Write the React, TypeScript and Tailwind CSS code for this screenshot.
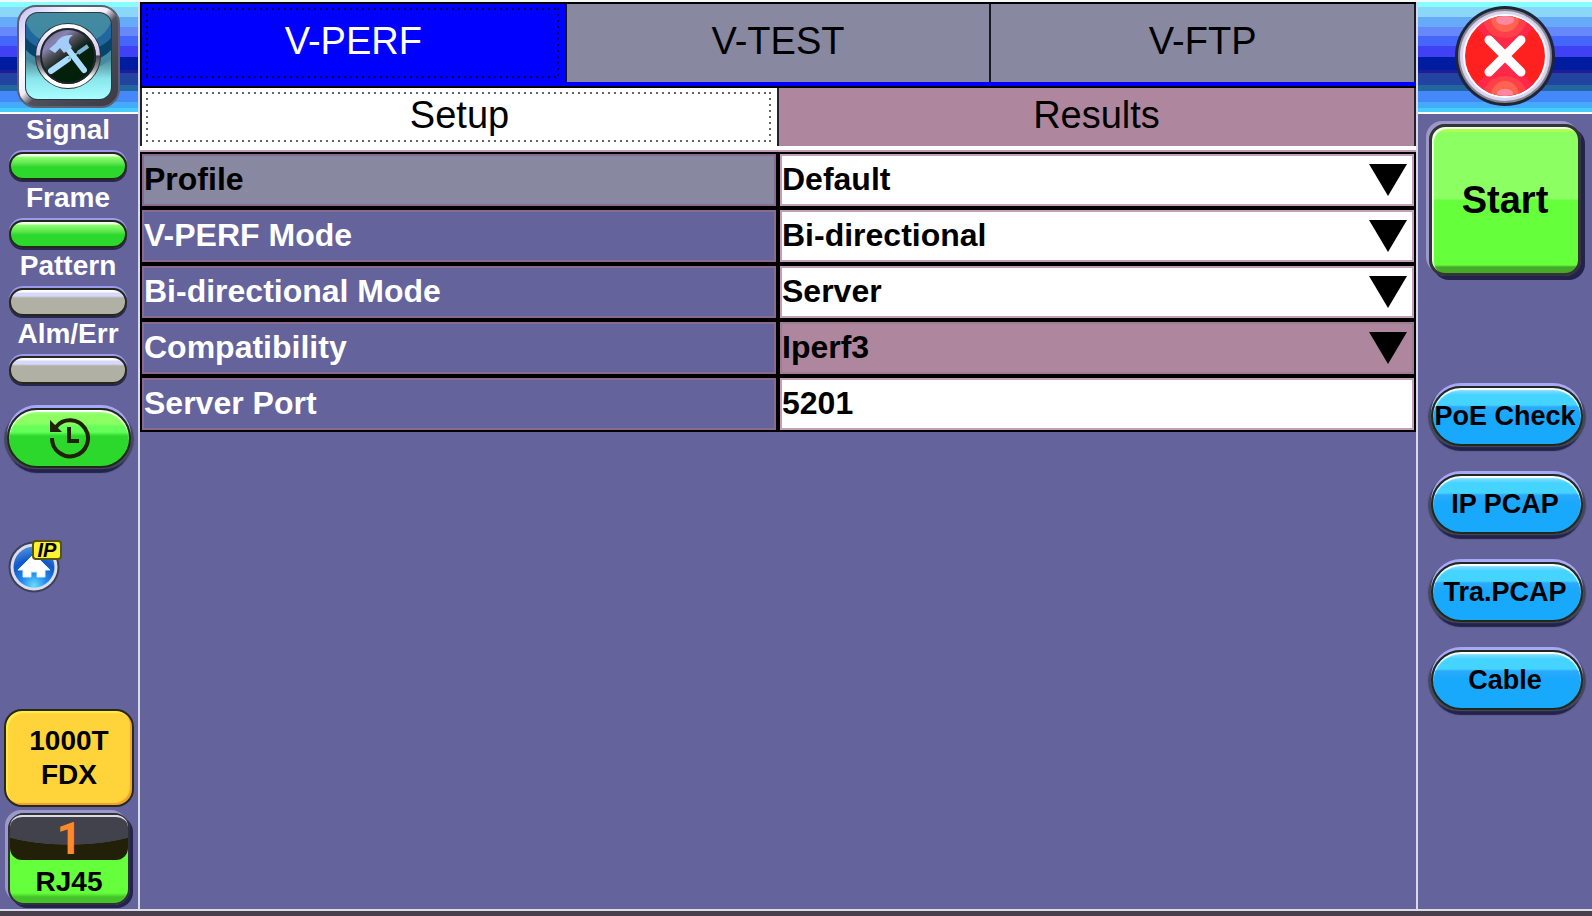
import { useState, type ReactNode } from 'react';

const HEADER_STRIPES =
  'bg-[linear-gradient(180deg,#88ffff_0_5px,#8bd7fa_5px_15px,#66aafa_15px_25px,#6688fa_25px_34px,#4466fa_34px_44px,#4040f5_44px_55px,#001ca0_55px_68px,#201c98_68px_71px,#2244a0_71px_83px,#2266a0_83px_89px,#4488fa_89px_100px,#44aafa_100px_106px,#44ccfa_106px_112px)]';

const DOTS_DARK =
  'bg-[repeating-linear-gradient(90deg,#00004a_0_2px,transparent_2px_6px),repeating-linear-gradient(90deg,#00004a_0_2px,transparent_2px_6px),repeating-linear-gradient(180deg,#00004a_0_2px,transparent_2px_6px),repeating-linear-gradient(180deg,#00004a_0_2px,transparent_2px_6px)]';
const DOTS_GRAY =
  'bg-[repeating-linear-gradient(90deg,#666666_0_2px,transparent_2px_6px),repeating-linear-gradient(90deg,#666666_0_2px,transparent_2px_6px),repeating-linear-gradient(180deg,#666666_0_2px,transparent_2px_6px),repeating-linear-gradient(180deg,#666666_0_2px,transparent_2px_6px)]';

function FocusDots({ tone }: { tone: string }) {
  return (
    <span
      aria-hidden="true"
      className={`pointer-events-none absolute inset-y-1 right-1.5 left-1 bg-no-repeat [background-position:top,bottom,left,right] [background-size:100%_2px,100%_2px,2px_100%,2px_100%] ${tone}`}
    />
  );
}

function ToolsIcon() {
  return (
    <svg viewBox="0 0 104 104" className="size-[104px]" aria-hidden="true">
      <defs>
        <linearGradient id="frame" x1="0" y1="0" x2="1" y2="1">
          <stop offset="0" stopColor="#c4bcf0" />
          <stop offset="0.12" stopColor="#dcd8fa" />
          <stop offset="0.3" stopColor="#ffffff" />
          <stop offset="0.46" stopColor="#f0eef8" />
          <stop offset="0.54" stopColor="#50505c" />
          <stop offset="1" stopColor="#3a3a46" />
        </linearGradient>
        <linearGradient id="plate" x1="0" y1="0" x2="0" y2="1">
          <stop offset="0" stopColor="#448aa0" />
          <stop offset="0.3" stopColor="#3f88a4" />
          <stop offset="0.5" stopColor="#3a7c9c" />
          <stop offset="0.64" stopColor="#66b0b8" />
          <stop offset="0.76" stopColor="#88e4ec" />
          <stop offset="1" stopColor="#aaffff" />
        </linearGradient>
        <linearGradient id="ring" x1="0" y1="0" x2="0" y2="1">
          <stop offset="0" stopColor="#ffffff" />
          <stop offset="0.48" stopColor="#c8c4ec" />
          <stop offset="0.5" stopColor="#44444c" />
          <stop offset="0.72" stopColor="#9a9aa0" />
          <stop offset="0.85" stopColor="#ffffff" />
          <stop offset="1" stopColor="#ffffff" />
        </linearGradient>
        <linearGradient id="dial" x1="0.1" y1="0" x2="0.8" y2="0.9">
          <stop offset="0" stopColor="#5a5a68" />
          <stop offset="0.28" stopColor="#8a84b4" />
          <stop offset="0.4" stopColor="#55555f" />
          <stop offset="0.55" stopColor="#1c2824" />
          <stop offset="0.62" stopColor="#04200c" />
          <stop offset="1" stopColor="#002008" />
        </linearGradient>
        <clipPath id="plateClip">
          <rect x="9" y="9" width="85" height="86" rx="12" />
        </clipPath>
      </defs>
      <rect x="1" y="2" width="101" height="101" rx="18" fill="url(#frame)" stroke="#5c6070" strokeWidth="2" />
      <rect x="8" y="8" width="87" height="88" rx="13" fill="#2c3844" />
      <g clipPath="url(#plateClip)">
        <rect x="9" y="9" width="85" height="86" fill="url(#plate)" />
        <path d="M9 18Q16 40 51 42Q86 40 94 18V54Q78 64 51 64Q24 64 9 54Z" fill="#2266a0" />
        <path d="M9 34Q20 48 51 50Q82 48 94 34V50Q80 58 51 58Q22 58 9 50Z" fill="#06446c" />
        <path d="M9 46Q16 54 28 56L30 66Q16 62 9 54ZM94 46Q87 54 75 56L73 66Q87 62 94 54Z" fill="#448aa0" />
      </g>
      <circle cx="51" cy="52" r="33" fill="#30343c" />
      <circle cx="51" cy="52" r="30" fill="url(#dial)" stroke="url(#ring)" strokeWidth="4" />
      <circle cx="51" cy="52" r="27" fill="none" stroke="#20242c" strokeWidth="2" />
      <path d="M34 67L51 55" stroke="#aaddff" strokeWidth="6" strokeLinecap="round" />
      <path d="M51 55L64 47" stroke="#7ab4d8" strokeWidth="2" />
      <path d="M61 49L71 42" stroke="#7ab4d8" strokeWidth="4" />
      <path d="M47 40L67 66" stroke="#aaddff" strokeWidth="6" strokeLinecap="round" />
      <path d="M32 45L39 39Q44 30 56 31Q51 34 52 39L55 43L47 49L43 44L38 49Z" fill="#a4ccf8" />
    </svg>
  );
}

function CloseIcon() {
  return (
    <svg viewBox="0 0 104 104" className="size-[104px]" aria-hidden="true">
      <defs>
        <clipPath id="disc">
          <circle cx="52" cy="52" r="40" />
        </clipPath>
      </defs>
      <circle cx="52" cy="52" r="50" fill="#20243a" />
      <circle cx="52" cy="52" r="47" fill="#84848e" />
      <circle cx="52" cy="52" r="45" fill="#d8d4f0" />
      <circle cx="52" cy="52" r="42" fill="#fff" />
      <circle cx="52" cy="52" r="40" fill="#ff2020" />
      <g clipPath="url(#disc)">
        <path d="M52 56L24 24V8H80V24Z" fill="#ff2848" />
        <path d="M52 52L24 80V96H80V80Z" fill="#ff2848" />
        <ellipse cx="52" cy="14" rx="22" ry="20" fill="#ff4048" />
        <ellipse cx="52" cy="92" rx="22" ry="20" fill="#ff4048" />
        <ellipse cx="52" cy="14" rx="14" ry="14" fill="#ff6450" />
        <ellipse cx="52" cy="92" rx="14" ry="15" fill="#ff6450" />
        <ellipse cx="52" cy="16" rx="9" ry="5" fill="#ff88a0" />
        <ellipse cx="52" cy="89" rx="8" ry="4" fill="#ff88a0" />
      </g>
      <path d="M36 36L68 68M68 36L36 68" stroke="#fff" strokeWidth="9" strokeLinecap="round" />
    </svg>
  );
}

function HistoryIcon() {
  return (
    <svg viewBox="0 0 44 44" className="size-11" aria-hidden="true" fill="none" stroke="#222008" strokeWidth="4">
      <path d="M5 22A18 18 0 1 0 9 11" />
      <path d="M3 4V16H15Z" fill="#222008" stroke="none" />
      <path d="M22 11V25H32" />
    </svg>
  );
}

function HomeIcon() {
  return (
    <svg viewBox="0 0 56 56" className="size-14" aria-hidden="true">
      <defs>
        <radialGradient id="globe" cx="0.5" cy="0.95" r="0.9">
          <stop offset="0" stopColor="#66ddff" />
          <stop offset="0.35" stopColor="#2288ee" />
          <stop offset="0.7" stopColor="#1058c8" />
          <stop offset="1" stopColor="#4488dd" />
        </radialGradient>
      </defs>
      <circle cx="26" cy="27" r="25.5" fill="#3c4058" />
      <circle cx="26" cy="27" r="23.5" fill="#dcdcec" />
      <circle cx="26" cy="27" r="20.5" fill="url(#globe)" />
      <path d="M26 14L42 30H37V37H29V32H23V37H15V30H10Z" fill="#fff" stroke="#d8ecff" strokeLinejoin="round" />
    </svg>
  );
}

function Led({ label, on }: { label: string; on: boolean }) {
  return (
    <li className="flex h-[68px] flex-col items-center">
      <span className="text-[28px] leading-8 font-bold text-white">{label}</span>
      <span
        className={`mt-1.5 h-7 w-[118px] rounded-full border-2 border-[#26261c] shadow-[0_-2px_0_#9a9aee,0_2px_0_#24284c] ${
          on
            ? 'bg-[linear-gradient(180deg,#f0ffe8_0_2px,#90ff70_3px,#60e850_9px,#2cd82c_13px)]'
            : 'bg-[linear-gradient(180deg,#fcfcff_0_2px,#d8d8fc_3px_6px,#b0b0a4_8px)]'
        }`}
      />
    </li>
  );
}

const CAPSULE =
  'flex h-[60px] shrink-0 items-center justify-center rounded-full border-2 border-[#22281c] whitespace-nowrap shadow-[inset_0_2px_1px_#ffffff,0_-3px_0_#a8a8f8,-3px_1px_1px_#44485c,3px_1px_1px_#44485c,0_5px_1px_#22224a]';

function ToolButton({ children }: { children: ReactNode }) {
  return (
    <button
      type="button"
      className={`${CAPSULE} w-[152px] bg-[linear-gradient(180deg,#88dcff_0_2px,#44d4ff_7px_17px,#2aaaff_19px,#18a8fc_28px)] pr-1 text-[27px] leading-8 font-bold text-black`}
    >
      {children}
    </button>
  );
}

const LABEL = 'flex items-center border-2 border-[#8a6a90] pb-0.5 text-[32px] leading-9 font-bold';
const FIELD =
  'block h-full w-full appearance-none border-2 pb-0.5 text-[32px] leading-9 font-bold text-black opacity-100 outline-none';

function Row({ id, label, active, children }: { id: string; label: string; active?: boolean; children: ReactNode }) {
  return (
    <div className="grid h-[52px] grid-cols-2 gap-1">
      <label htmlFor={id} className={`${LABEL} ${active ? 'bg-[#8888a0] text-black' : 'bg-[#64639c] text-white'}`}>
        {label}
      </label>
      <div className="relative">{children}</div>
    </div>
  );
}

function Choice({ id, options, locked }: { id: string; options: string[]; locked?: boolean }) {
  return (
    <>
      <select
        id={id}
        disabled={locked}
        className={`${FIELD} ${locked ? 'border-[#a07c94] bg-[#ae879f]' : 'border-[#c4a0b8] bg-white'}`}
      >
        {options.map((option) => (
          <option key={option}>{option}</option>
        ))}
      </select>
      <svg viewBox="0 0 38 32" className="pointer-events-none absolute top-2.5 right-[7px] h-8 w-[38px]" aria-hidden="true">
        <path d="M0 0H38L19 32Z" fill="#000" />
      </svg>
    </>
  );
}

const MAIN_TABS = ['V-PERF', 'V-TEST', 'V-FTP'];
const SUB_TABS = ['Setup', 'Results'];

export default function App() {
  const [tab, setTab] = useState('V-PERF');
  const [view, setView] = useState('Setup');

  return (
    <div className="flex min-h-screen flex-col border-t-2 border-[#f4f8f8] bg-[#64639c] font-['Liberation_Sans',Arial,sans-serif]">
      <div className="flex flex-1">
        <aside className="flex w-[138px] shrink-0 flex-col items-center">
          <div className={`flex h-28 w-full shrink-0 justify-center border-b-2 border-white pt-0.5 ${HEADER_STRIPES}`}>
            <button type="button" aria-label="Tools" className="size-[104px]">
              <ToolsIcon />
            </button>
          </div>
          <ul className="pr-0.5">
            <Led label="Signal" on />
            <Led label="Frame" on />
            <Led label="Pattern" on={false} />
            <Led label="Alm/Err" on={false} />
          </ul>
          <button
            type="button"
            aria-label="History"
            className={`${CAPSULE} mt-[22px] w-[124px] bg-[linear-gradient(180deg,#a0ff80_0_2px,#8cff62_5px_14px,#66ff5a_16px_22px,#2cd82c_26px)]`}
          >
            <HistoryIcon />
          </button>
          <a href="#ip" aria-label="IP home" className="relative mt-[72px] ml-2 self-start">
            <HomeIcon />
            <span className="absolute top-0 left-6 flex h-5 w-[30px] items-center justify-center rounded-sm border-2 border-[#55550c] bg-[#fff230] text-xl leading-4 font-bold text-black italic">
              IP
            </span>
          </a>
          <button
            type="button"
            className="mt-auto h-[98px] w-[130px] shrink-0 rounded-[18px] border-2 border-[#2a281c] bg-[#ffd43a] text-[28px] leading-[34px] font-bold text-black shadow-[inset_2px_2px_1px_#ffee44,inset_-2px_-2px_1px_#f0a030]"
          >
            1000T
            <br />
            FDX
          </button>
          <button
            type="button"
            className="mt-1.5 mb-1 flex h-[92px] w-[122px] shrink-0 flex-col rounded-2xl border-2 border-[#303038] bg-[linear-gradient(180deg,#66ff3c_0_78px,#44c428_82px)] font-bold shadow-[-3px_-3px_0_#9c98c8,3px_3px_0_#22224a]"
          >
            <span className="flex h-[45px] w-full items-center justify-center rounded-xl border-t-2 border-[#dcdce4] bg-[radial-gradient(ellipse_90px_28px_at_50%_0,#42424c_98%,#222008_100%)] font-['Roboto',sans-serif] text-[44px] leading-none text-[#ff8828]">
              1
            </span>
            <span className="w-full pt-1 text-center text-[28px] leading-9 text-black">RJ45</span>
          </button>
        </aside>

        <main className="flex min-w-0 flex-1 flex-col border-x-2 border-[#d8d8ea]">
          <div role="tablist" aria-label="Applications" className="grid grid-cols-3 border-t-2 border-b-2 border-l-2 border-black bg-[#0000ff] pb-1">
            {MAIN_TABS.map((name) => (
              <button
                key={name}
                type="button"
                role="tab"
                aria-selected={tab === name}
                onClick={() => setTab(name)}
                className={`relative h-[78px] border-r-2 border-[#181820] pb-1 text-[38px] leading-none ${
                  tab === name ? 'bg-[#0000ff] text-white' : 'bg-[#8888a0] text-black'
                }`}
              >
                {name}
                {tab === name && <FocusDots tone={DOTS_DARK} />}
              </button>
            ))}
          </div>
          <div role="tablist" aria-label="Views" className="grid grid-cols-2 border-l-2 border-[#222228]">
            {SUB_TABS.map((name) => (
              <button
                key={name}
                type="button"
                role="tab"
                aria-selected={view === name}
                onClick={() => setView(name)}
                className={`relative h-[58px] border-r-2 border-[#222228] pb-1 text-[38px] leading-none text-black ${
                  view === name ? 'bg-white' : 'bg-[#ae879f]'
                }`}
              >
                {name}
                {view === name && <FocusDots tone={DOTS_GRAY} />}
              </button>
            ))}
          </div>
          <div className="h-1.5 border-b-2 border-[#c09cb4] bg-white" />
          <form className="flex flex-col gap-1 border-2 border-black bg-black">
            <Row id="profile" label="Profile" active>
              <Choice id="profile" options={['Default']} />
            </Row>
            <Row id="mode" label="V-PERF Mode">
              <Choice id="mode" options={['Bi-directional']} />
            </Row>
            <Row id="direction" label="Bi-directional Mode">
              <Choice id="direction" options={['Server']} />
            </Row>
            <Row id="compatibility" label="Compatibility">
              <Choice id="compatibility" options={['Iperf3']} locked />
            </Row>
            <Row id="port" label="Server Port">
              <input id="port" type="text" defaultValue="5201" className={`${FIELD} border-[#c4a0b8] bg-white`} />
            </Row>
          </form>
        </main>

        <aside className="flex w-[174px] shrink-0 flex-col items-center">
          <div className={`flex h-28 w-full shrink-0 justify-center border-b-2 border-white pt-0.5 ${HEADER_STRIPES}`}>
            <button type="button" aria-label="Close" className="size-[104px]">
              <CloseIcon />
            </button>
          </div>
          <button
            type="button"
            className="mt-2.5 size-[152px] shrink-0 rounded-2xl border-[3px] border-[#343438] bg-[linear-gradient(180deg,#b0ff50_0_4px,#8cff62_6px_72px,#66ff3c_73px_138px,#44aa28_140px)] text-[38px] leading-none font-bold text-black shadow-[inset_2px_2px_0_#f0ffe8,-3px_-3px_0_#9c98c8,4px_4px_0_#22224a]"
          >
            Start
          </button>
          <div className="mt-[110px] flex flex-col gap-7 pl-1">
            <ToolButton>PoE Check</ToolButton>
            <ToolButton>IP PCAP</ToolButton>
            <ToolButton>Tra.PCAP</ToolButton>
            <ToolButton>Cable</ToolButton>
          </div>
        </aside>
      </div>
      <footer className="h-[7px] border-t-2 border-[#dcdce8] bg-[#4a3f4c]" />
    </div>
  );
}
